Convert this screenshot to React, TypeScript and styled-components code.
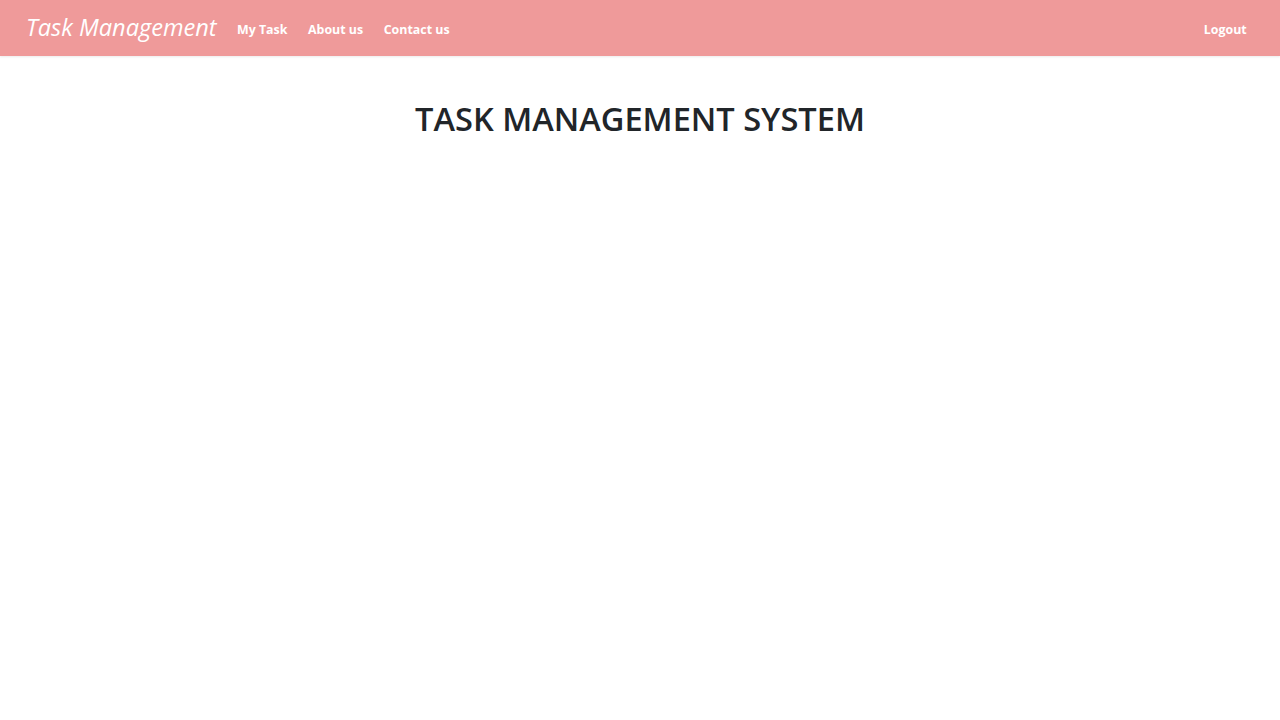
import React from "react";
import styled, { createGlobalStyle } from "styled-components";

const Global = createGlobalStyle`
  html, body { margin: 0; padding: 0; background: #fff; }
  body { font-family: "Open Sans", "Noto Sans", sans-serif; color: #212529; }
`;

const Navbar = styled.nav`
  height: 56px;
  background: #ef9a9a;
  display: flex;
  align-items: center;
  padding: 0 26px;
  box-sizing: border-box;
  box-shadow: 0 1px 2px rgba(0,0,0,0.08);
`;

const Brand = styled.a`
  font-size: 23.6px;
  font-style: italic;
  color: #fff;
  text-decoration: none;
  margin-right: 10px;
  line-height: 1;
  padding-bottom: 1px;
`;

const NavList = styled.div`
  display: flex;
  align-items: center;
  flex: 1;
`;

const NavLink = styled.a`
  font-size: 12.4px;
  font-weight: 700;
  color: #fff;
  text-decoration: none;
  padding: 2px 10.3px 0;
`;

const Right = styled.div`
  display: flex;
  align-items: center;
  margin-right: -3px;
`;

const Main = styled.main`
  display: flex;
  justify-content: center;
  padding-top: 40px;
`;

const Title = styled.h1`
  margin: 0;
  font-size: 32.6px;
  font-weight: 600;
  color: #212529;
`;

export default function App() {
  return (
    <>
      <Global />
      <Navbar>
        <Brand href="#">Task Management</Brand>
        <NavList>
          <NavLink href="#">My Task</NavLink>
          <NavLink href="#">About us</NavLink>
          <NavLink href="#">Contact us</NavLink>
        </NavList>
        <Right>
          <NavLink href="#">Logout</NavLink>
        </Right>
      </Navbar>
      <Main>
        <Title>TASK MANAGEMENT SYSTEM</Title>
      </Main>
    </>
  );
}
